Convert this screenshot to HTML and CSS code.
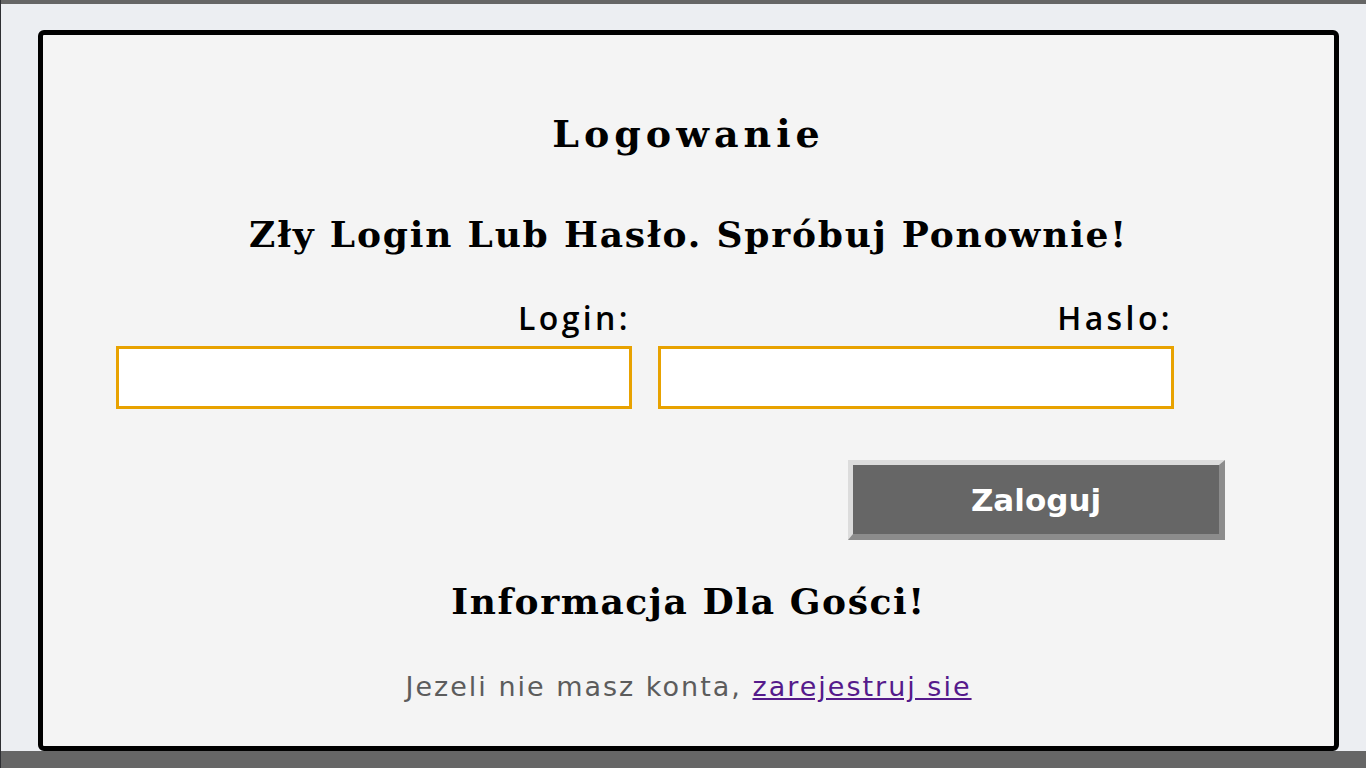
FILE: index.html
```html
<!DOCTYPE html>
<html lang="pl">
<head>
<meta charset="utf-8">
<title>Logowanie</title>
<link rel="stylesheet" href="styles.css">
</head>
<body>
<div class="topbar"></div>
<main class="page">
  <section class="card">
    <h1 class="title">Logowanie</h1>
    <h2 class="title error">Zły Login Lub Hasło. Spróbuj Ponownie!</h2>
    <form class="login-form">
      <div class="fields">
        <label class="field">
          <span class="field-label">Login:</span>
          <input class="field-input" type="text" name="login">
        </label>
        <label class="field">
          <span class="field-label">Haslo:</span>
          <input class="field-input" type="password" name="haslo">
        </label>
      </div>
      <div class="actions">
        <button class="submit" type="submit">Zaloguj</button>
      </div>
    </form>
    <h2 class="title guests">Informacja Dla Gości!</h2>
    <p class="register">Jezeli nie masz konta, <a href="#" class="register-link">zarejestruj sie</a></p>
  </section>
</main>
<div class="bottombar"></div>
</body>
</html>
```

FILE: styles.css
```css
html, body {
  margin: 0;
  padding: 0;
}

body {
  background: #eceef2;
  border-left: 1px solid #2e2f33;
  height: 768px;
  box-sizing: border-box;
  display: flex;
  flex-direction: column;
  overflow: hidden;
}

.topbar {
  height: 4px;
  background: #666666;
  flex: none;
}

.page {
  flex: none;
  padding: 26px 0 0 37px;
}

.card {
  width: 1301px;
  height: 721px;
  box-sizing: border-box;
  border: 5px solid #000;
  border-radius: 6px;
  background: #f4f4f4;
  padding-top: 76px;
}

.title {
  margin: 0;
  font-family: "DejaVu Serif", "Liberation Serif", serif;
  font-weight: bold;
  font-size: 38px;
  line-height: 46px;
  letter-spacing: 5px;
  text-align: center;
  color: #000;
}

.error {
  margin-top: 55px;
  font-size: 36px;
  line-height: 44px;
  letter-spacing: 1.8px;
}

.login-form {
  margin-top: 44px;
  padding: 0 73px;
}

.fields {
  display: flex;
  gap: 26px;
}

.field {
  width: 516px;
  display: flex;
  flex-direction: column;
  gap: 10px;
}

.field-label {
  font-family: "Open Sans", "DejaVu Sans", sans-serif;
  font-weight: 600;
  font-size: 32px;
  line-height: 36px;
  letter-spacing: 3.4px;
  text-align: right;
  padding-right: 1px;
  color: #000;
}

.field-input {
  display: block;
  width: 516px;
  height: 63px;
  box-sizing: border-box;
  border: 3px solid #e8a200;
  background: #fff;
  margin: 0;
  padding: 0 8px;
  font-size: 24px;
  outline: none;
}

.actions {
  display: flex;
  justify-content: flex-end;
  padding-right: 36px;
  margin-top: 51px;
}

.submit {
  width: 377px;
  height: 80px;
  box-sizing: border-box;
  border-style: solid;
  border-width: 5px 6px 6px 5px;
  border-color: #dcdcdc #8c8c8c #8c8c8c #dcdcdc;
  background: #666666;
  color: #fff;
  font-family: "DejaVu Sans", "Liberation Sans", sans-serif;
  font-weight: bold;
  font-size: 31px;
  padding: 0;
  cursor: pointer;
}

.guests {
  margin-top: 39px;
  font-size: 36px;
  line-height: 44px;
  letter-spacing: 1.6px;
}

.register {
  margin: 48px 0 0;
  font-family: "DejaVu Sans", "Liberation Sans", sans-serif;
  font-size: 27px;
  line-height: 32px;
  letter-spacing: 2px;
  text-align: center;
  color: #5c5c5c;
}

.register-link {
  color: #551a8b;
}

.bottombar {
  flex: 1;
  background: #666666;
}
```
